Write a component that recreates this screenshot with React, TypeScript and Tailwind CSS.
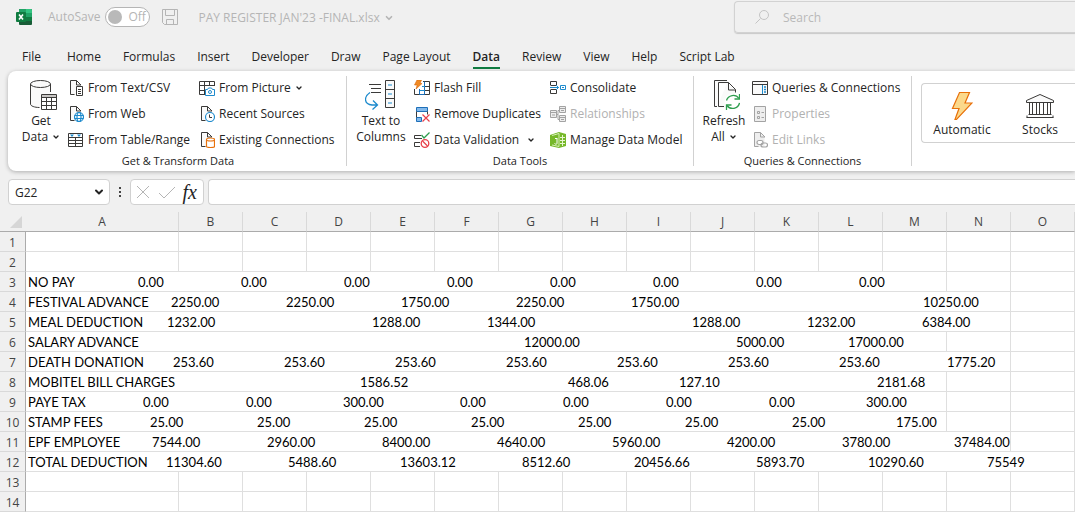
import type { ReactNode } from 'react';
import { ChevronDown } from 'lucide-react';

interface IconProps {
  children: ReactNode;
  w?: number;
  h?: number;
}

function Icon({ children, w = 16, h = 16 }: IconProps) {
  return (
    <svg
      width={w}
      height={h}
      viewBox={`0 0 ${w} ${h}`}
      fill="none"
      stroke="#3b3a39"
      className="shrink-0"
      aria-hidden="true"
    >
      {children}
    </svg>
  );
}

function Page({ stroke = '#3b3a39', fill = '#fafafa' }) {
  return (
    <>
      <path d="M2.5 .5h6l4 4v10.5h-10z" fill={fill} stroke="none" />
      <path d="M6.5 14.5h-4V.5h6l4.5 4.5h-4.5V.5" stroke={stroke} />
    </>
  );
}

function ExcelLogo() {
  return (
    <Icon>
      <g stroke="none">
        <rect x="3" width="13" height="16" rx="1" fill="#185c37" />
        <path d="M4 0h5.5v4H3V1a1 1 0 0 1 1-1z" fill="#21a366" />
        <path d="M9.500 0H15a1 1 0 0 1 1 1v3H9.500z" fill="#33c481" />
        <path d="M3 4h6.500v4H3z" fill="#107c41" />
        <path d="M9.500 4H16v4H9.500z" fill="#21a366" />
        <path d="M9.500 8H16v4H9.500z" fill="#107c41" />
        <rect y="3" width="10" height="10" rx="1" fill="#107c41" />
      </g>
      <path d="M3 5.500l4 5M7 5.500l-4 5" stroke="#fff" strokeWidth="1.600" />
    </Icon>
  );
}

const icons = {
  getData: (
    <Icon w={32} h={32}>
      <g transform="translate(4 0)">
        <path d="M1.500 5v20c0 2 4 3.500 10 3.500V15h10V5z" fill="#fafafa" stroke="none" />
        <ellipse cx="11.500" cy="5" rx="10" ry="3.500" fill="#fafafa" />
        <path d="M1.500 5v20c0 2 4 3.500 9 3.500M21.500 5v8" />
        <path d="M12.500 15.500h15v15h-15z" fill="#fff" />
        <path d="M13 16h14v2.500H13z" fill="#c8c6c4" stroke="none" />
        <path d="M12.500 18.500h15M12.500 22.500h15M12.500 26.500h15M17.500 18.500v12M22.500 18.500v12" />
      </g>
    </Icon>
  ),
  textCsv: (
    <Icon>
      <Page />
      <path d="M8.500 6.500h6v9h-6z" fill="#fff" />
      <path d="M10 9.500h3M10 11.500h3M10 13.500h3" />
    </Icon>
  ),
  web: (
    <Icon>
      <Page />
      <circle cx="11" cy="11" r="4.500" fill="#fff" stroke="#1e8bcd" strokeWidth="1.200" />
      <path d="M6.500 9.500h9M6.500 12.500h9" stroke="#1e8bcd" strokeWidth="1.200" />
      <ellipse cx="11" cy="11" rx="2" ry="4.500" stroke="#1e8bcd" strokeWidth="1.200" />
    </Icon>
  ),
  table: (
    <Icon>
      <path d="M.5 1.500h14v13H.5z" fill="#fff" />
      <path d="M.5 5.500h14M.5 8.500h14M.5 11.500h14M7.500 5.500v9" />
      <path d="M2 2.500h4L4 5zM9 2.500h4l-2 2.500z" fill="#1e8bcd" stroke="none" />
    </Icon>
  ),
  picture: (
    <Icon>
      <path d="M6 14.500H.5V1.500h15V6M.5 5.500h15M.5 10.500H5M5.500 1.500v13M10.500 1.500V6" />
      <path d="M6.500 9.500h2l1-1.500h3l1 1.500h2v6h-9z" fill="#fff" stroke="#1e8bcd" />
      <circle cx="11" cy="12" r="1.500" stroke="#1e8bcd" />
    </Icon>
  ),
  recent: (
    <Icon>
      <Page />
      <circle cx="11" cy="11" r="4.500" fill="#fff" stroke="#1e8bcd" strokeWidth="1.200" />
      <path d="M10.500 8.500v3H13" />
    </Icon>
  ),
  existing: (
    <Icon>
      <Page />
      <path d="M7.500 7.500v7c0 .6 1.800 1 4 1s4-.4 4-1v-7" fill="#fff" stroke="#e8710a" strokeWidth="1.200" />
      <ellipse cx="11.500" cy="7.500" rx="4" ry="1.500" fill="#fff" stroke="#e8710a" strokeWidth="1.200" />
    </Icon>
  ),
  textToColumns: (
    <Icon w={32} h={32}>
      <g transform="translate(-1 0)">
        <path d="M5 5.500h12M7 9.500h10M7 13.500h10" />
        <path d="M21.500 1.500h9v27h-9zM21.500 10.500h9M21.500 19.500h9" fill="#fafafa" />
        <path d="M24 6h4M24 15h4M24 24h4" stroke="#1e8bcd" strokeWidth="1.200" />
        <path d="M6 13.500C-.5 18 0 25 8 26h5M9 21.500l4.500 4.500-5 4.500" stroke="#1e8bcd" strokeWidth="1.300" />
      </g>
    </Icon>
  ),
  flashFill: (
    <Icon>
      <path d="M9 1.500h6.500v13H.5V9M5 10.500h10.500M8 6.500h7.500" />
      <path d="M5.500 9v5.500M10.500 1.500v13M5.500 14.500h5V5.500" stroke="#1e6fb8" />
      <path d="M6 10.500h5M8 6.500h3" stroke="#1e8bcd" />
      <path d="M3 0h4.500L6 3.500h2L2 9l1.200-4H.5z" fill="#f08a24" stroke="#d9660b" strokeWidth=".6" />
    </Icon>
  ),
  duplicates: (
    <Icon>
      <path d="M2.500 1.500h11v4h-11zM2.500 11.500h5v4h-5z" fill="#83b9eb" stroke="#1e6fb8" />
      <path d="M2.500 5.500v6M13.500 5.500v3" />
      <path d="M8.500 8.500l7 7M15.500 8.500l-7 7" stroke="#e8404a" strokeWidth="1.200" />
    </Icon>
  ),
  validation: (
    <Icon>
      <path d="M7 3.500H.5v3H8M6 10.500H.5v4H6" />
      <path d="M7.500 3l2.500 3 5.500-5.500" stroke="#2f9e4f" strokeWidth="1.300" />
      <circle cx="11" cy="11.500" r="3.800" fill="#fff" stroke="#e8404a" strokeWidth="1.300" />
      <path d="M8.500 9l5 5" stroke="#e8404a" strokeWidth="1.300" />
    </Icon>
  ),
  consolidate: (
    <Icon>
      <path d="M.5 5V1.500h6V5M.5 10v3.500h6V10M.5 5.500h6M.5 9.500h6" />
      <path d="M0 7.500h8.500M6 5l2.500 2.500L6 10M10.500 5.500h5v4h-5zM12 7.500h2" stroke="#1e8bcd" />
    </Icon>
  ),
  relationships: (
    <Icon>
      <g stroke="#a3a3a3">
        <path d="M.5 4.500h6v7h-6zM9.500 .5h6v6h-6zM9.500 9.500h6v6h-6z" fill="#eee" />
        <path d="M.5 6.500h6M9.500 2.500h6M9.500 11.500h6M6.500 8.500h1.500M9.500 4.500H8v9h1.500M2 9h3M11 4.500h3M11 13.500h3" />
      </g>
    </Icon>
  ),
  dataModel: (
    <Icon>
      <path d="M0 3l9-3 7 2v12l-7 2-9-2z" fill="#76b82a" stroke="none" />
      <path d="M2 3.500l7-2v13l-7-1.500" stroke="#d6efb4" />
      <path d="M7 6v5.500c0 .8-1.500 1-2.500 0M5 6.500h2" stroke="#fff" />
      <path d="M10 5.500h5M10 8.500h5M10 11.500h5M12.500 3v11" stroke="#e6f5cf" />
    </Icon>
  ),
  refresh: (
    <Icon w={32} h={32}>
      <g transform="translate(2 0)">
        <path d="M18 1.500H4.500v27H7M8 28.500V4.500h10l7 7v17z" fill="#fafafa" stroke="none" />
        <path d="M17 1.500H4.500v26H7" />
        <path d="M14 27.500H8.500v-24h10l7 7v3M18.500 3.500v7.500h7" />
        <circle cx="22.500" cy="23" r="8" fill="#fff" stroke="none" />
        <path d="M16.500 21.500a7 7 0 0 1 12.500-2M29.500 24a7 7 0 0 1-12.500 2.500" stroke="#2f9e4f" strokeWidth="1.300" />
        <path d="M29.500 15v5h-5M16.500 31v-5h5" stroke="#2f9e4f" strokeWidth="1.300" />
      </g>
    </Icon>
  ),
  queries: (
    <Icon>
      <path d="M.5 1.500h15v13H.5zM.5 4.500h15" fill="#fafafa" />
      <path d="M10.500 5v9" stroke="#1e8bcd" />
      <path d="M12 7h2M12 9.500h2M12 12h2" stroke="#1e8bcd" strokeWidth="1.300" />
    </Icon>
  ),
  properties: (
    <Icon>
      <g stroke="#a3a3a3">
        <path d="M2.500 .5h11v15h-11z" fill="#eee" />
        <path d="M5.500 5.500h2v2h-2zM5.500 10.500h2v2h-2zM9.500 6.500H12M9.500 11.500H12" />
      </g>
    </Icon>
  ),
  editLinks: (
    <Icon>
      <Page stroke="#a3a3a3" fill="#eee" />
      <g stroke="#a3a3a3" strokeWidth="1.200">
        <rect x="5" y="8.500" width="6" height="4" rx="2" fill="#fff" />
        <rect x="9" y="11" width="6.500" height="4" rx="2" />
      </g>
    </Icon>
  ),
  automatic: (
    <Icon w={22} h={30}>
      <path d="M8.500 1.500h10l-4.500 10.500h7L5.500 28.500H4L8 17.500H1.500z" fill="#fbd98b" stroke="#e8710a" strokeWidth="1.200" />
    </Icon>
  ),
  stocks: (
    <Icon w={28} h={26}>
      <path d="M.5 9.500v-2L14 1.500l13.500 6v2z" fill="#fafafa" />
      <path d="M3.500 10v11M6.500 10v11M10.500 10v11M13.500 10v11M17.500 10v11M21.500 10v11M24.500 10v11M2.500 21.500h23M.5 24.500h27M1 22.500v2M27 22.500v2" />
    </Icon>
  ),
};

const tabs = [
  'File', 'Home', 'Formulas', 'Insert', 'Developer', 'Draw',
  'Page Layout', 'Data', 'Review', 'View', 'Help', 'Script Lab',
];

interface CommandProps {
  icon: ReactNode;
  label: string;
  menu?: boolean;
  wideMenu?: boolean;
  disabled?: boolean;
}

function Command({ icon, label, menu, wideMenu, disabled }: CommandProps) {
  return (
    <button
      disabled={disabled}
      className="flex h-[26px] items-center gap-1 whitespace-nowrap disabled:text-[#b1b1b1]"
    >
      {icon}
      {label}
      {menu && <ChevronDown className="h-2 w-2" strokeWidth={4} />}
      {wideMenu && <ChevronDown className="ml-1 h-2 w-2" strokeWidth={4} />}
    </button>
  );
}

interface BigCommandProps {
  icon: ReactNode;
  lines: [string, string];
  menu?: boolean;
  className: string;
}

function BigCommand({ icon, lines, menu, className }: BigCommandProps) {
  return (
    <button className={`flex shrink-0 flex-col items-center pt-1 leading-4 ${className}`}>
      {icon}
      <span className="mt-0.5">{lines[0]}</span>
      <span className="flex items-center gap-1 whitespace-nowrap">
        {lines[1]}
        {menu && <ChevronDown className="h-2 w-2" strokeWidth={4} />}
      </span>
    </button>
  );
}

function Group({ title, className, children }: { title: string; className: string; children: ReactNode }) {
  return (
    <section aria-label={title} className={`shrink-0 border-r border-[#d1d1d1] ${className}`}>
      <div className="-mt-px flex h-[78px] pl-1.5">{children}</div>
      <h2 className="text-center text-[11px] leading-4">{title}</h2>
    </section>
  );
}

function Ribbon() {
  return (
    <div className="ml-2 flex h-[100px] overflow-hidden rounded-l-lg bg-white py-[5px] text-[12px] text-[#242424] shadow-[0_1px_4px_rgba(0,0,0,0.28)]">
      <Group title="Get & Transform Data" className="w-[339px] pl-0.5">
        <BigCommand icon={icons.getData} lines={['Get', 'Data']} menu className="mr-0.5 w-[50px]" />
        <div className="w-[131px]">
          <Command icon={icons.textCsv} label="From Text/CSV" />
          <Command icon={icons.web} label="From Web" />
          <Command icon={icons.table} label="From Table/Range" />
        </div>
        <div>
          <Command icon={icons.picture} label="From Picture" menu />
          <Command icon={icons.recent} label="Recent Sources" />
          <Command icon={icons.existing} label="Existing Connections" />
        </div>
      </Group>
      <Group title="Data Tools" className="w-[347px]">
        <BigCommand icon={icons.textToColumns} lines={['Text to', 'Columns']} className="mr-[5px] w-14" />
        <div className="w-[136px]">
          <Command icon={icons.flashFill} label="Flash Fill" />
          <Command icon={icons.duplicates} label="Remove Duplicates" />
          <Command icon={icons.validation} label="Data Validation" wideMenu />
        </div>
        <div>
          <Command icon={icons.consolidate} label="Consolidate" />
          <Command icon={icons.relationships} label="Relationships" disabled />
          <Command icon={icons.dataModel} label="Manage Data Model" />
        </div>
      </Group>
      <Group title="Queries & Connections" className="w-[218px]">
        <BigCommand icon={icons.refresh} lines={['Refresh', 'All']} menu className="mr-1 w-12" />
        <div>
          <Command icon={icons.queries} label="Queries & Connections" />
          <Command icon={icons.properties} label="Properties" disabled />
          <Command icon={icons.editLinks} label="Edit Links" disabled />
        </div>
      </Group>
      <div className="ml-[9px] mt-[7px] flex h-[60px] min-w-0 flex-1 overflow-hidden rounded-l border border-r-0 border-[#d1d1d1]">
        <button className="flex w-20 shrink-0 flex-col items-center justify-end pb-[3px]">
          {icons.automatic}
          Automatic
        </button>
        <button className="flex w-[76px] shrink-0 flex-col items-center justify-end gap-0.5 pb-[3px]">
          {icons.stocks}
          Stocks
        </button>
      </div>
    </div>
  );
}

function TitleBar() {
  return (
    <header className="flex h-[34px] shrink-0 items-center text-[12px] text-[#b5b5b5]">
      <div className="flex flex-1 items-center pl-4">
        <ExcelLogo />
        <label className="ml-4 flex items-center gap-[5px]">
          AutoSave
          <span className="flex h-5 w-[45px] items-center gap-1.5 rounded-full border border-[#b5b5b5] bg-white pl-0.5">
            <input type="checkbox" className="h-3.5 w-3.5 appearance-none rounded-full bg-[#b9b9b9]" />
            Off
          </span>
        </label>
        <button aria-label="Save" className="ml-3">
          <Icon>
            <g stroke="#b5b5b5">
              <path d="M.5 .5h15v15H2.500l-2-2zM3.500 .5v6h9v-6M4.500 15.500v-5h7v5" />
            </g>
          </Icon>
        </button>
        <button className="ml-5 flex items-center gap-1 pt-0.5">
          PAY REGISTER JAN'23 -FINAL.xlsx
          <ChevronDown className="h-2.5 w-2.5" strokeWidth={4} />
        </button>
      </div>
      <label className="flex h-8 w-[341px] items-center gap-3.5 rounded-l border border-r-0 border-[#d2d2d2] pl-5 shadow-[0_1px_1px_#c8c8c8]">
        <Icon w={14}>
          <circle cx="9" cy="6" r="4.500" stroke="#c4c4c4" />
          <path d="M5.500 9.500L.5 14.500" stroke="#c4c4c4" />
        </Icon>
        <input
          type="search"
          aria-label="Search"
          placeholder="Search"
          className="min-w-0 flex-1 bg-transparent pt-0.5 outline-none placeholder:text-[#b9b9b9]"
        />
      </label>
    </header>
  );
}

function FormulaBar() {
  return (
    <div className="flex shrink-0 pt-2 pl-2">
      <label className="flex h-[26px] w-[102px] items-center rounded border border-[#d1d1d1] bg-white pr-1 pl-1.5">
        <input
          aria-label="Name box"
          defaultValue="G22"
          className="min-w-0 flex-1 pt-0.5 text-[12px] text-[#242424] outline-none"
        />
        <ChevronDown className="h-3 w-3 text-[#242424]" strokeWidth={4} />
      </label>
      <div className="flex w-5 items-center justify-center">
        <svg width="2" height="12" fill="#444" aria-hidden="true">
          <path d="M0 1h2v2H0zM0 5h2v2H0zM0 9h2v2H0z" />
        </svg>
      </div>
      <div className="flex h-[26px] w-[74px] items-center justify-between rounded border border-[#d1d1d1] bg-white px-1">
        <button aria-label="Cancel">
          <Icon>
            <path d="M2 2l12 12M14 2L2 14" stroke="#b5b5b5" />
          </Icon>
        </button>
        <button aria-label="Enter">
          <Icon w={18}>
            <path d="M1 9l5 5L17 3" stroke="#b5b5b5" />
          </Icon>
        </button>
        <button
          aria-label="Insert function"
          className="pr-0.5 font-['Liberation_Serif',serif] text-[20px] leading-5 text-[#242424] italic"
        >
          fx
        </button>
      </div>
      <input
        aria-label="Formula"
        className="ml-1 h-[26px] min-w-0 flex-1 rounded-l border border-r-0 border-[#d1d1d1] bg-white outline-none"
      />
    </div>
  );
}

const columns = ['A', 'B', 'C', 'D', 'E', 'F', 'G', 'H', 'I', 'J', 'K', 'L', 'M', 'N', 'O'];

interface PayRow {
  label: string;
  span: number;
  // [start in px from the left edge of column A, amount]
  values: [number, string][];
}

const payRows: Record<number, PayRow> = {
  3: { label: 'NO PAY', span: 13, values: [[112, '0.00'], [215, '0.00'], [318, '0.00'], [421, '0.00'], [524, '0.00'], [627, '0.00'], [730, '0.00'], [833, '0.00']] },
  4: { label: 'FESTIVAL ADVANCE', span: 14, values: [[145, '2250.00'], [260, '2250.00'], [375, '1750.00'], [490, '2250.00'], [605, '1750.00'], [897, '10250.00']] },
  5: { label: 'MEAL DEDUCTION', span: 14, values: [[141, '1232.00'], [346, '1288.00'], [461, '1344.00'], [666, '1288.00'], [781, '1232.00'], [896, '6384.00']] },
  6: { label: 'SALARY ADVANCE', span: 13, values: [[498, '12000.00'], [710, '5000.00'], [822, '17000.00']] },
  7: { label: 'DEATH DONATION', span: 14, values: [[147, '253.60'], [258, '253.60'], [369, '253.60'], [480, '253.60'], [591, '253.60'], [702, '253.60'], [813, '253.60'], [921, '1775.20']] },
  8: { label: 'MOBITEL BILL CHARGES', span: 13, values: [[334, '1586.52'], [542, '468.06'], [653, '127.10'], [851, '2181.68']] },
  9: { label: 'PAYE TAX', span: 13, values: [[117, '0.00'], [220, '0.00'], [317, '300.00'], [434, '0.00'], [537, '0.00'], [640, '0.00'], [743, '0.00'], [840, '300.00']] },
  10: { label: 'STAMP FEES', span: 13, values: [[124, '25.00'], [231, '25.00'], [338, '25.00'], [445, '25.00'], [552, '25.00'], [659, '25.00'], [766, '25.00'], [870, '175.00']] },
  11: { label: 'EPF EMPLOYEE', span: 14, values: [[126, '7544.00'], [241, '2960.00'], [356, '8400.00'], [471, '4640.00'], [586, '5960.00'], [701, '4200.00'], [816, '3780.00'], [928, '37484.00']] },
  12: { label: 'TOTAL DEDUCTION', span: 15, values: [[140, '11304.60'], [262, '5488.60'], [374, '13603.12'], [496, '8512.60'], [608, '20456.66'], [730, '5893.70'], [842, '10290.60'], [961, '75549']] },
};

function PayText({ row }: { row: PayRow }) {
  const { label, values } = row;
  return (
    <div className="flex pl-0.5 whitespace-nowrap">
      <span className="shrink-0" style={{ width: values[0][0] - 2 }}>
        {label}
      </span>
      {values.map(([start, amount], i) => {
        const next = values[i + 1];
        return (
          <span key={start} className="shrink-0" style={{ width: next ? next[0] - start : undefined }}>
            {amount}
          </span>
        );
      })}
    </div>
  );
}

function Sheet() {
  return (
    <div className="mt-[7px] min-h-0 flex-1 overflow-hidden bg-white">
      <table className="w-[1075px] table-fixed border-separate border-spacing-0">
        <colgroup>
          <col className="w-[26px]" />
          <col className="w-[153px]" />
          {columns.slice(1).map((c) => (
            <col key={c} className="w-16" />
          ))}
        </colgroup>
        <thead className="bg-[#f0f0f0] text-[12px] text-[#444]">
          <tr className="h-5">
            <th className="border-b border-[#ababab] p-0">
              <svg width="12" height="12" className="ml-2.5" aria-hidden="true">
                <path d="M12 0v12H0z" fill="#d6d6d6" />
              </svg>
            </th>
            {columns.map((c) => (
              <th
                key={c}
                scope="col"
                className="border-r border-b border-r-[#d9d9d9] border-b-[#ababab] p-0 leading-[18px] font-normal"
              >
                {c}
              </th>
            ))}
          </tr>
        </thead>
        <tbody className="font-[Lato,sans-serif] text-[13px] text-black">
          {Array.from({ length: 14 }, (_, i) => i + 1).map((n) => {
            const row = payRows[n];
            const empty = row ? columns.slice(row.span) : columns;
            return (
              <tr key={n} className="h-5">
                <th
                  scope="row"
                  className="border-r border-b border-r-[#ababab] border-b-[#d9d9d9] bg-[#f0f0f0] p-0 pt-0.5 font-['Open_Sans',sans-serif] text-[12px] leading-[17px] font-normal text-[#444]"
                >
                  {n}
                </th>
                {row && (
                  <td colSpan={row.span} className="border-r border-b border-[#dfdfdf] p-0 pt-0.5 leading-[17px]">
                    <PayText row={row} />
                  </td>
                )}
                {empty.map((c) => (
                  <td key={c} className="border-r border-b border-[#dfdfdf] p-0" />
                ))}
              </tr>
            );
          })}
        </tbody>
      </table>
    </div>
  );
}

export default function App() {
  return (
    <div className="flex h-screen flex-col overflow-hidden bg-[#f0f0f0] font-['Open_Sans','Noto_Sans',sans-serif]">
      <TitleBar />
      <nav className="flex h-[37px] shrink-0 items-center gap-[22px] pt-2.5 pl-[22px] text-[12px] whitespace-nowrap text-[#242424]">
        {tabs.map((tab) => (
          <a
            key={tab}
            href="#"
            aria-current={tab === 'Data' ? 'page' : undefined}
            className="border-b-2 border-transparent leading-5 first:mr-1 aria-[current=page]:border-[#107c41] aria-[current=page]:font-semibold"
          >
            {tab}
          </a>
        ))}
      </nav>
      <Ribbon />
      <FormulaBar />
      <Sheet />
    </div>
  );
}
